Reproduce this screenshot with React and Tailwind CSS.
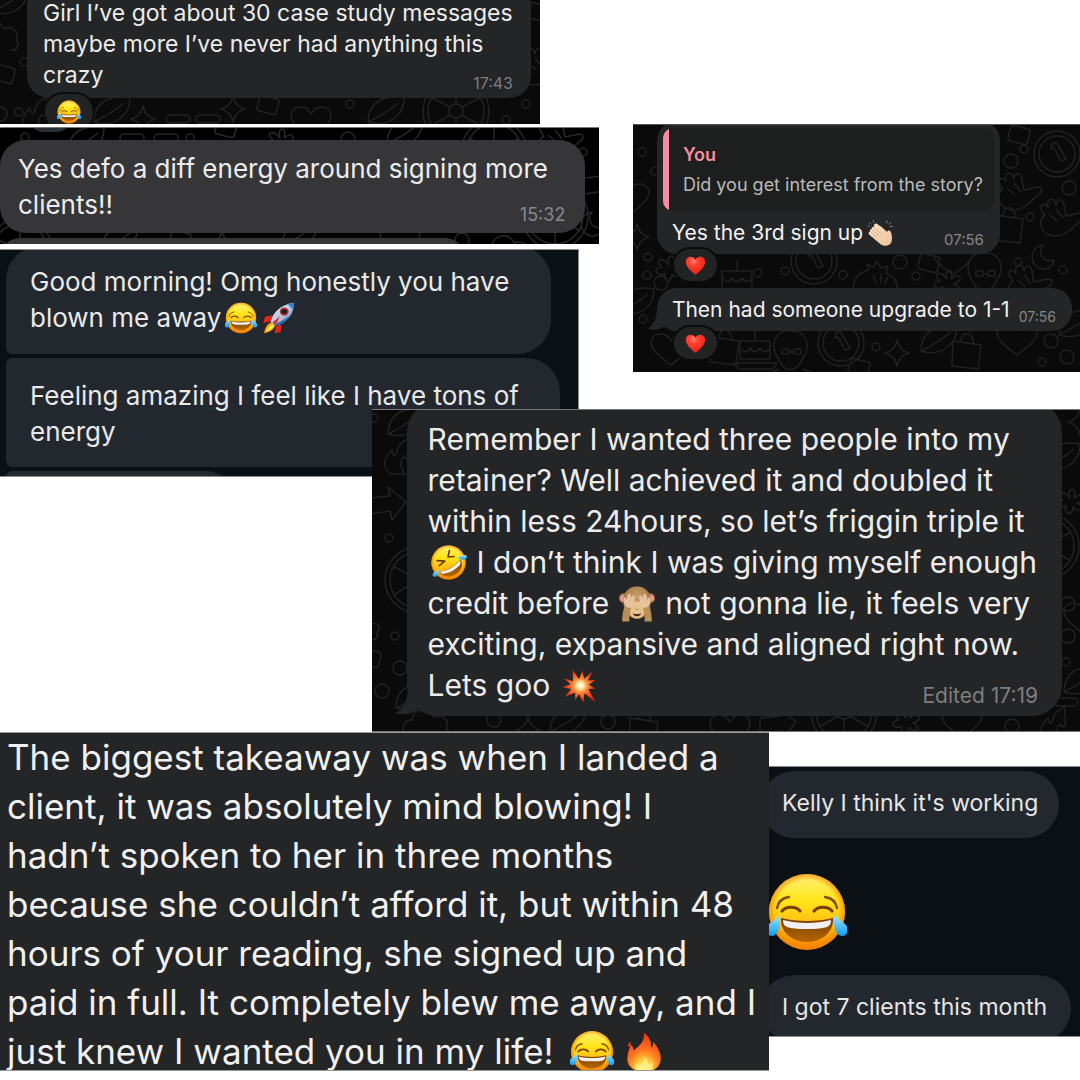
import clsx from "clsx";

const GRADIENTS = (
  <svg width="0" height="0" className="absolute" aria-hidden="true">
    <defs>
      <linearGradient id="face" x1="0" y1="0" x2="0" y2="1">
        <stop offset="0" stopColor="#fff27a" />
        <stop offset="0.35" stopColor="#ffe619" />
        <stop offset="0.62" stopColor="#ffc314" />
        <stop offset="1" stopColor="#f98200" />
      </linearGradient>
      <radialGradient id="rim" cx="50%" cy="50%" r="50%">
        <stop offset="0.82" stopColor="#f08a00" stopOpacity="0" />
        <stop offset="1" stopColor="#f07c00" stopOpacity="0.7" />
      </radialGradient>
      <linearGradient id="tear" x1="0" y1="0" x2="0" y2="1">
        <stop offset="0" stopColor="#a5e6ff" />
        <stop offset="1" stopColor="#0a9cf2" />
      </linearGradient>
      <linearGradient id="mouth" x1="0" y1="0" x2="0" y2="1">
        <stop offset="0" stopColor="#7a3c00" />
        <stop offset="1" stopColor="#b56800" />
      </linearGradient>
      <radialGradient id="heart" cx="40%" cy="25%" r="80%">
        <stop offset="0" stopColor="#ff8373" />
        <stop offset="0.3" stopColor="#ff4030" />
        <stop offset="1" stopColor="#e31b12" />
      </radialGradient>
      <radialGradient id="boom" cx="54%" cy="48%" r="55%">
        <stop offset="0" stopColor="#ffffff" />
        <stop offset="0.18" stopColor="#ffe9a0" />
        <stop offset="0.4" stopColor="#ff8a3a" />
        <stop offset="0.75" stopColor="#f23d14" />
        <stop offset="1" stopColor="#d9260b" />
      </radialGradient>
      <radialGradient id="fire" cx="50%" cy="92%" r="85%">
        <stop offset="0" stopColor="#fffbb0" />
        <stop offset="0.25" stopColor="#ffd23c" />
        <stop offset="0.55" stopColor="#ff7a20" />
        <stop offset="1" stopColor="#ee3a1c" />
      </radialGradient>
      <linearGradient id="skin" x1="0" y1="0" x2="1" y2="1">
        <stop offset="0" stopColor="#fbe3ca" />
        <stop offset="1" stopColor="#f0c29c" />
      </linearGradient>
      <linearGradient id="hull" x1="0" y1="0" x2="1" y2="1">
        <stop offset="0" stopColor="#dfeaf5" />
        <stop offset="0.5" stopColor="#b9cbdd" />
        <stop offset="1" stopColor="#3d7fc0" />
      </linearGradient>
      <radialGradient id="fur" cx="50%" cy="30%" r="65%">
        <stop offset="0" stopColor="#c9a068" />
        <stop offset="1" stopColor="#94683a" />
      </radialGradient>
    </defs>
  </svg>
);

function Joy({ className }) {
  return (
    <svg viewBox="0 0 80 80" className={className} role="img" aria-label="face with tears of joy">
      <circle cx="40" cy="40" r="38" fill="url(#face)" />
      <circle cx="40" cy="40" r="38" fill="url(#rim)" />
      <path d="M10 36c1-6 5-10 12-11M70 36c-1-6-5-10-12-11" fill="none" stroke="#8a4b00" strokeWidth="2.4" strokeLinecap="round" />
      <path d="M15 39c4-5 14-5 18 0M47 39c4-5 14-5 18 0" fill="none" stroke="#7a3f00" strokeWidth="3.2" strokeLinecap="round" />
      <path d="M14 46c16 4 36 4 52 0 1 14-11 24-26 24S13 60 14 46z" fill="url(#mouth)" />
      <path d="M16 48c15 4 33 4 48 0 0 7-4 9-24 9s-24-2-24-9z" fill="#f1f1f4" />
      <path d="M13 43c1 9-1 20-8 21-6 0-8-7-3-12 3-3 7-5 11-9z" fill="url(#tear)" />
      <path d="M67 43c-1 9 1 20 8 21 6 0 8-7 3-12-3-3-7-5-11-9z" fill="url(#tear)" />
    </svg>
  );
}

function Rofl({ className }) {
  return (
    <svg viewBox="0 0 80 80" className={className} role="img" aria-label="rolling on the floor laughing">
      <circle cx="40" cy="40" r="37" fill="url(#face)" />
      <circle cx="40" cy="40" r="37" fill="url(#rim)" />
      <path d="M15 36l17 1-12 10M42 14l-3 14 13-1" fill="none" stroke="#6e3b00" strokeWidth="3.5" strokeLinecap="round" strokeLinejoin="round" />
      <path d="M20 60C38 58 56 47 66 33c7 13 1 27-11 33-12 7-28 6-35-6z" fill="url(#mouth)" />
      <path d="M22 60c17-2 33-12 43-25 2 5 1 9-2 12-9 9-20 15-32 17-4 1-7 0-9-4z" fill="#f6f6f8" />
      <path d="M60 31c6-6 14-9 19-6 2 5-2 9-7 9-4 0-8-2-12-3z" fill="url(#tear)" />
      <path d="M20 56c-2 7-3 14-9 15-5 0-7-5-4-8 3-4 8-5 13-7z" fill="url(#tear)" />
    </svg>
  );
}

function Rocket({ className }) {
  return (
    <svg viewBox="0 0 80 80" className={className} role="img" aria-label="rocket">
      <path d="M24 33L5 37 1 53l17-5zM46 56l-2 19-15 4 3-17z" fill="#e8231a" />
      <path d="M25 50C12 51 4 65 3 78c12-2 25-8 28-21z" fill="#ff9d0a" />
      <path d="M26 55c-9 2-15 10-18 19 9-2 17-7 19-15z" fill="#ffe94a" />
      <path d="M19 50C24 26 46 5 78 2c-1 32-21 51-47 58z" fill="url(#hull)" />
      <path d="M62 5l16-3c0 6-1 12-3 17z" fill="#2e7fd0" />
      <path d="M31 60c14-4 28-13 37-27-12 10-27 18-41 22z" fill="#2b6db5" />
      <ellipse cx="53" cy="24" rx="11" ry="10" fill="#c32a2a" />
      <ellipse cx="53" cy="24" rx="7" ry="6" fill="#1c1f2b" />
      <path d="M24 50c5-2 12-8 17-15-1 9-6 17-13 21z" fill="#e3211b" />
    </svg>
  );
}

function Clap({ className }) {
  return (
    <svg viewBox="0 0 80 80" className={className} role="img" aria-label="clapping hands">
      <path d="M8 8l5 5M20 2l1 6M2 18l6 1M62 2l-2 7M74 8l-6 5M78 20l-7 0" stroke="#7c7c7c" strokeWidth="3" strokeLinecap="round" />
      <path d="M34 20c4-4 8-2 12 2l20 18c-1-8 6-9 8-2 3 10 5 22 1 31-4 8-14 12-22 7z" fill="#e6b893" />
      <path d="M23 13c4-4 8-2 11 1l28 25c0-8 7-9 9-2 3 9 6 22 0 32-6 11-21 13-30 5L7 45c-5-5 0-10 4-7-6-6 0-12 5-8-5-6 1-11 6-7-2-4-2-7 1-10z" fill="url(#skin)" />
      <path d="M12 38l18 16M17 31l19 17M23 24l20 18" stroke="#d19a73" strokeWidth="2" strokeLinecap="round" />
    </svg>
  );
}

function Heart({ className }) {
  return (
    <svg viewBox="0 0 80 80" className={className} role="img" aria-label="red heart">
      <path d="M40 76C28 66 3 48 3 26 3 6 30-1 40 18 50-1 77 6 77 26c0 22-25 40-37 50z" fill="url(#heart)" />
    </svg>
  );
}

function Monkey({ className }) {
  return (
    <svg viewBox="0 0 80 80" className={className} role="img" aria-label="see-no-evil monkey">
      <circle cx="11" cy="27" r="11" fill="#a9794a" />
      <circle cx="69" cy="27" r="11" fill="#a9794a" />
      <circle cx="10" cy="27" r="7" fill="#f598a0" />
      <circle cx="70" cy="27" r="7" fill="#f598a0" />
      <path d="M40 1c19 0 31 14 31 32 0 22-13 40-31 40S9 55 9 33C9 15 21 1 40 1z" fill="url(#fur)" />
      <path d="M40 34c10 0 17 12 17 23 0 9-7 15-17 15s-17-6-17-15c0-11 7-23 17-23z" fill="#e6c08d" />
      <path d="M31 61c6 2 12 2 18 0-2 8-16 8-18 0z" fill="#4a1711" />
      <path d="M37 51l2 1M43 51l-2 1" stroke="#775031" strokeWidth="2" />
      <path d="M7 79c0-14 2-28 7-38l14 4c-4 10-5 21-5 34zM73 79c0-14-2-28-7-38l-14 4c4 10 5 21 5 34z" fill="#ba9058" />
      <path d="M14 44c-5-7-5-17-2-19 3 0 4 3 5 6 1-9 3-15 7-14 3 1 2 6 2 12 2-7 5-10 8-8 3 3-1 15-2 24-4 5-13 5-18-1z" fill="#e8c3a0" />
      <path d="M66 44c5-7 5-17 2-19-3 0-4 3-5 6-1-9-3-15-7-14-3 1-2 6-2 12-2-7-5-10-8-8-3 3 1 15 2 24 4 5 13 5 18-1z" fill="#e8c3a0" />
    </svg>
  );
}

function Boom({ className }) {
  return (
    <svg viewBox="0 0 80 80" className={className} role="img" aria-label="collision">
      <path
        d="M25 2l15 22L48 4l4 19L72 6 61 27l18-1-16 11 15 9-16 1 17 31-26-21-3 22-10-20-9 14 0-18L6 66l16-19L1 43l19-7L4 21l22 8z"
        fill="url(#boom)"
      />
    </svg>
  );
}

function Fire({ className }) {
  return (
    <svg viewBox="0 0 80 88" className={className} role="img" aria-label="fire">
      <path
        d="M40 1c13 9 17 22 16 34 4-3 5-8 4-14 12 12 19 28 17 42-2 16-17 25-36 25S4 79 3 62C2 48 8 38 10 27c5 4 7 9 7 14 9-10 25-17 23-40zM10 21c-5 4-6 8-5 12 4-3 6-7 5-12z"
        fill="url(#fire)"
      />
      <path d="M41 54c8 7 5 14 11 17 3-3 4-5 4-8 6 10 4 21-6 25H31c-11-4-13-12-8-20 3 2 4 4 5 6 9-4 14-10 13-20z" fill="#fff08a" opacity=".75" />
    </svg>
  );
}

// outline drawings of the chat wallpaper, each centred on 0,0
const SHAPES = {
  dot: <circle r="4" />,
  ring: <circle r="7" />,
  star: <path d="M0-13c2 8 5 11 12 13-7 2-10 5-12 13-2-8-5-11-12-13 7-2 10-5 12-13z" />,
  heart: <path d="M0 16C-10 8-20 2-20-7-19-17-5-18 0-8 5-18 19-17 20-7 20 2 10 8 0 16z" />,
  moon: <path d="M0-10c-12 1-15 18-4 23 7 3 14-1 15-8-10 3-17-6-11-15z" />,
  pill: <rect x="-12" y="-4" width="24" height="8" rx="4" />,
  card: <rect x="-10" y="-8" width="20" height="16" rx="3" transform="rotate(14)" />,
  wheel: (
    <>
      <circle r="33" />
      <circle r="28" />
      <circle r="7" />
      <path d="M0-7v-21M6-4l19-10M6 4l19 11M0 7v21M-6 4l-19 11M-6-4l-19-10" />
    </>
  ),
  clock: (
    <>
      <circle r="23" />
      <circle r="18" />
      <path d="M-6-9l5-3 10 17-5 2-7-13-3 1z" />
    </>
  ),
  hand: <path d="M-18 14c-4-8-2-14 2-16-8-9-2-14 3-8-2-10 6-10 8-2 1-8 8-6 8 1l2 10 14-3c5 0 5 5 1 7L8 14c-8 6-18 7-26 0zM-12-3l8 7M-5-8l7 9" />,
  bun: <path d="M-22 14c-8-8-2-22 12-25l-2-6 6 3 4-5 4 6 7-2-2 7c12 5 14 16 8 23-10 5-26 5-37-1zM-6-6l3 8M2-7v9M9-5l-3 8" />,
  cake: <path d="M-15-4h30v18h-30zM-15 3c5 5 8 5 10 0 3 5 7 5 10 0 3 5 7 5 10 0M0-4v-10M-20 18h42l-4 6h-34z" />,
  face: <path d="M-15 4c-7-18 6-26 15-24 12-1 20 10 14 24l-6 10c-5 6-13 6-17 0zM-9-2h7v5h-7zM3-2h7v5H3zM-2 1h5M-12 18c-12 4-14 10-15 20M12 18c12 4 14 10 15 20" />,
  arrow: <path d="M-18-6L2-8l-2-9 18 15L4 16 2 7l-20 3z" />,
  flame: <path d="M-8 18c-9-8-5-18 2-24 0 6 4 6 5 2 1-8 6-10 12-14-2 8 2 12 0 18-1 4-4 3-4 0-6 4-6 12 1 18z" />,
  cloud: <path d="M-24 12c-9-6-4-17 4-16 1-12 18-14 22-3 9-4 16 4 12 11 5 5 1 11-6 10M-14 12c2 4 8 4 10 0" />,
  leaf: <path d="M-18 10C-18-10-2-18 18-14 18 4 2 16-18 10zM-18 10C-6 4 4-2 12-9" />,
  bag: <path d="M-14-10l28 4-3 24-26-3zM-6-9c0-12 12-11 13 2" />,
  flower: <path d="M0-4c-4-12 8-12 4 0 9-8 14 2 3 5 10 4 4 12-4 4 0 10-10 8-7-1-9 5-13-5-3-6-8-6-1-12 7-2z" />,
};

const WALL_MESSAGES = [
  ["cloud", 2, 36], ["leaf", 10, 2], ["dot", 24, 62], ["card", 4, 74], ["flame", 36, 114], ["dot", 19, 112], ["ring", 0, 114],
  ["star", 143, 119], ["pill", 178, 119], ["pill", 208, 119], ["star", 233, 109], ["card", 268, 105], ["heart", 311, 122],
  ["leaf", 112, 112], ["dot", 350, 104], ["leaf", 386, 112], ["wheel", 456, 111], ["dot", 506, 120],
  ["dot", 526, 104], ["card", 538, 12], ["hand", 540, 66],
];

const WALL_ENERGY = [
  ["dot", 25, 9], ["pill", 132, 10], ["pill", 166, 10], ["dot", 190, 10], ["leaf", 86, 14], ["card", 226, 0], ["flower", 280, 14],
  ["ring", 348, 11], ["leaf", 405, 6], ["wheel", 494, 24], ["hand", 560, 10], ["dot", 583, 24], ["arrow", 602, 56],
  ["moon", 592, 94], ["wheel", 20, 124], ["leaf", 120, 112], ["card", 180, 112], ["star", 222, 116], ["leaf", 300, 108],
  ["heart", 400, 112], ["ring", 462, 112], ["cloud", 512, 122], ["wheel", 555, 88],
];

const WALL_SIGNUP = [
  ["dot", 9, 27], ["heart", -4, 74], ["dot", 22, 46], ["star", 4, 112], ["dot", 15, 132], ["dot", 14, 150], ["ring", 28, 158],
  ["leaf", 3, 178], ["dot", 10, 194], ["flower", 36, 144], ["card", 386, 10], ["clock", 424, 29], ["ring", 378, 36],
  ["dot", 391, 24], ["hand", 386, 66], ["ring", 436, 63], ["hand", 428, 92], ["dot", 397, 92], ["bag", 376, 100],
  ["moon", 410, 130], ["dot", 385, 137], ["dot", 430, 145], ["clock", 181, 136], ["ring", 267, 137], ["dot", 125, 148],
  ["dot", 152, 146], ["dot", 210, 150], ["cake", 104, 150], ["bun", 246, 156], ["dot", 283, 151], ["flower", 314, 158],
  ["card", 296, 138], ["face", 352, 148], ["hand", 396, 158], ["heart", 320, 134],
  ["heart", 38, 224], ["bag", 92, 222], ["cake", 122, 220], ["face", 158, 226], ["clock", 208, 218], ["dot", 243, 222],
  ["star", 264, 228], ["leaf", 306, 216], ["bag", 334, 226], ["heart", 384, 214], ["ring", 418, 216],
  ["dot", 409, 237], ["ring", 434, 232], ["leaf", 444, 200], ["card", 226, 243],
];

const WALL_RETAINER = [
  ["leaf", 34, 14], ["dot", 2, 8], ["flame", 26, 46], ["arrow", 16, 94], ["dot", 17, 128], ["wheel", 46, 170],
  ["card", -4, 220], ["dot", 23, 226], ["card", -2, 248], ["ring", 28, 258], ["ring", 10, 281], ["leaf", 42, 288],
  ["cloud", 60, 314], ["ring", 122, 310], ["star", 156, 320], ["leaf", 196, 312], ["ring", 236, 312], ["bag", 272, 318],
  ["heart", 358, 320], ["arrow", 406, 314], ["wheel", 472, 302], ["flower", 534, 312], ["heart", 590, 312],
  ["ring", 640, 316], ["flame", 682, 314], ["star", 708, 12], ["leaf", 690, 48], ["flower", 698, 92], ["wheel", 674, 136],
  ["ring", 696, 194], ["heart", 712, 208], ["ring", 696, 226], ["dot", 694, 252], ["leaf", 710, 272], ["pill", 694, 292],
];

function Wallpaper({ items, className }) {
  return (
    <svg
      className={clsx("pointer-events-none absolute inset-0 size-full", className)}
      fill="none"
      stroke="currentColor"
      strokeWidth="1.5"
      strokeLinejoin="round"
      aria-hidden="true"
    >
      {items.map(([shape, x, y]) => (
        <g key={`${shape}-${x}-${y}`} transform={`translate(${x} ${y})`}>
          {SHAPES[shape]}
        </g>
      ))}
    </svg>
  );
}

// message text, one row per line, with the time at the end of the last row
function Lines({ rows, time, timeClass }) {
  return (
    <div className="whitespace-nowrap">
      {rows.map((row, i) => (
        <div key={i} className="flex justify-between">
          <p>{row}</p>
          {time && i === rows.length - 1 && (
            <time className={clsx("self-end", timeClass)}>{time}</time>
          )}
        </div>
      ))}
    </div>
  );
}

function Reaction({ children, className }) {
  return (
    <div
      className={clsx(
        "relative flex items-center justify-center rounded-full bg-[#212423] ring-2 ring-[#0b0b0b]",
        className
      )}
    >
      {children}
    </div>
  );
}

function Tail({ className }) {
  return (
    <svg viewBox="0 0 24 24" className={clsx("absolute", className)} aria-hidden="true">
      <path d="M10 0c0 11-3 18-10 22 8 2 15 0 20-5l4-17z" fill="#242527" />
    </svg>
  );
}

function MessagesPanel() {
  return (
    <section className="relative h-31 w-1/2 overflow-hidden bg-[#0a0a0a]">
      <Wallpaper items={WALL_MESSAGES} className="text-[#222222]" />
      <div className="relative -mt-4 mr-[9px] ml-[27px] rounded-[22px] bg-[#242527] pt-3.5 pr-[18px] pb-[7px] pl-4 text-[23px] leading-[31px] text-[#ececec]">
        <Lines
          rows={[
            "Girl I’ve got about 30 case study messages",
            "maybe more I’ve never had anything this",
            "crazy",
          ]}
          time="17:43"
          timeClass="text-base leading-4 text-[#7d7e80]"
        />
      </div>
      <Reaction className="-mt-1 ml-[45px] h-9 w-12">
        <Joy className="size-6" />
      </Reaction>
    </section>
  );
}

function EnergyPanel() {
  return (
    <section className="relative h-[117px] w-[55.5%] overflow-hidden border-t border-[#777] bg-black">
      <Wallpaper items={WALL_ENERGY} className="text-[#272727]" />
      <div className="relative -mt-7 ml-7 h-8 w-11 rounded-full bg-[#2a3136]" />
      <div className="relative mt-2 mr-[14px] rounded-[26px] bg-[#363638] pt-[11px] pr-5 pb-2.5 pl-[18px] text-[26px] leading-9 text-[#ececec]">
        <Lines
          rows={["Yes defo a diff energy around signing more", "clients!!"]}
          time="15:32"
          timeClass="text-lg leading-4 text-[#88888d]"
        />
      </div>
      <div className="relative mt-[5px] h-10 w-[465px] rounded-[26px] bg-[#363638]" />
    </section>
  );
}

function MorningPanel() {
  return (
    <section className="h-[228px] w-[53.6%] overflow-hidden border-t border-r border-b border-[#8a8d90] bg-[#0b1014] pl-1.5 text-[26px] leading-9 text-[#e9e9ea]">
      <div className="-mt-1 mr-[27px] rounded-[34px] rounded-bl-md bg-[#23282f] pt-[18px] pb-[18px] pl-6">
        <Lines
          rows={[
            "Good morning! Omg honestly you have",
            <span className="flex items-center">
              blown me away
              <Joy className="ml-1 size-8" />
              <Rocket className="ml-1.5 size-8" />
            </span>,
          ]}
        />
      </div>
      <div className="mt-1 mr-[18px] rounded-[34px] rounded-l-md bg-[#23282f] pt-5 pb-[17px] pl-6">
        <Lines rows={["Feeling amazing I feel like I have tons of", "energy"]} />
      </div>
      <div className="mt-1 h-16 w-[232px] rounded-[34px] rounded-l-md bg-[#23282f]" />
    </section>
  );
}

function SignUpPanel() {
  return (
    <section className="relative mt-31 h-62 w-[41.4%] overflow-hidden border-t border-[#555] bg-[#0a0a0a] pl-6 text-[21px] leading-[30px] text-[#f1f1f1]">
      <Wallpaper items={WALL_SIGNUP} className="text-[#212121]" />
      <div className="relative -mt-1 w-[343px] rounded-[20px] bg-[#242527] px-1.5 pt-[7px] pb-1.5">
        <blockquote className="flex overflow-hidden rounded-[10px] bg-[#1d1f1e] text-lg leading-[30px] whitespace-nowrap">
          <div className="w-1.5 bg-[#f98d9d]" />
          <div className="pt-3 pb-[11px] pl-3.5">
            <p className="font-semibold text-[#f98d9d]">You</p>
            <p className="text-[#b9bbbb]">Did you get interest from the story?</p>
          </div>
        </blockquote>
        <div className="pt-[7px] pr-2.5 pl-[9px]">
          <Lines
            rows={[
              <span className="flex items-center">
                Yes the 3rd sign up
                <Clap className="ml-1 size-[26px]" />
              </span>,
            ]}
            time="07:56"
            timeClass="text-[15px] leading-4 text-[#858688]"
          />
        </div>
      </div>
      <Reaction className="-mt-[5px] ml-[17px] h-8 w-[43px]">
        <Heart className="size-[21px]" />
      </Reaction>
      <div className="relative mt-[7px] mr-2 rounded-[20px] bg-[#242527] pt-[7px] pr-4 pb-1.5 pl-[15px]">
        <Tail className="bottom-0 -left-2.5 size-6" />
        <div className="relative">
          <Lines
            rows={["Then had someone upgrade to 1-1"]}
            time="07:56"
            timeClass="text-sm leading-4 text-[#858688]"
          />
        </div>
      </div>
      <Reaction className="-mt-1 ml-[17px] h-8 w-[43px]">
        <Heart className="size-[21px]" />
      </Reaction>
    </section>
  );
}

function RetainerPanel() {
  return (
    <section className="relative -mt-17 ml-auto h-[323px] w-[65.6%] overflow-hidden border-y border-[#777] bg-[#0a0a0a]">
      <Wallpaper items={WALL_RETAINER} className="text-[#222222]" />
      <div className="relative -mt-2 mr-[18px] ml-[35px] rounded-[30px] bg-[#242527] pt-[17px] pr-6 pb-2.5 pl-[21px] text-[30px] leading-[41px] text-[#ececec]">
        <Tail className="bottom-0 -left-3 size-8" />
        <div className="relative">
          <Lines
            rows={[
              "Remember I wanted three people into my",
              "retainer? Well achieved it and doubled it",
              "within less 24hours, so let’s friggin triple it",
              <span className="flex items-center">
                <Rofl className="mr-2.5 ml-0.5 size-[37px]" />I don’t think I was giving myself enough
              </span>,
              <span className="flex items-center">
                credit before
                <Monkey className="mr-2.5 ml-2.5 size-9" />
                not gonna lie, it feels very
              </span>,
              "exciting, expansive and aligned right now.",
              <span className="flex items-center">
                Lets goo
                <Boom className="ml-3 size-[34px]" />
              </span>,
            ]}
            time="Edited 17:19"
            timeClass="text-[21px] leading-5 text-[#7d7e80]"
          />
        </div>
      </div>
    </section>
  );
}

function TakeawayPanel() {
  return (
    <section className="h-[339px] w-[71.2%] overflow-hidden border-y border-[#999] bg-[#242527] pl-[7px] text-[35px] leading-[49px] text-[#f0f0f0]">
      <Lines
        rows={[
          "The biggest takeaway was when I landed a",
          "client, it was absolutely mind blowing! I",
          "hadn’t spoken to her in three months",
          "because she couldn’t afford it, but within 48",
          "hours of your reading, she signed up and",
          "paid in full. It completely blew me away, and I",
          <span className="flex items-center">
            just knew I wanted you in my life!
            <Joy className="ml-4 size-11" />
            <Fire className="ml-3 h-11 w-9" />
          </span>,
        ]}
      />
    </section>
  );
}

function ClientsPanel() {
  return (
    <section className="mt-[34px] h-[271px] flex-1 overflow-hidden border-y border-[#8a8d90] bg-[#0b1014] text-[23px] leading-8 text-[#e6e6e7]">
      <p className="mt-1 mr-[21px] -ml-2 rounded-full bg-[#23282f] pt-4 pb-[19px] pl-[21px] whitespace-nowrap">
        Kelly I think it's working
      </p>
      <Joy className="mt-[34px] -ml-0.5 size-20" />
      <p className="mt-[23px] mr-[9px] -ml-2 rounded-full bg-[#23282f] pt-4 pb-[19px] pl-[21px] whitespace-nowrap">
        I got 7 clients this month
      </p>
    </section>
  );
}

export default function App() {
  return (
    <main className="min-h-screen overflow-hidden bg-white font-['Inter',sans-serif]">
      {GRADIENTS}
      <div className="flex items-start justify-between">
        <div className="-mr-[50%] flex w-full flex-col">
          <MessagesPanel />
          <div className="h-[3px]" />
          <EnergyPanel />
          <div className="h-[5px]" />
          <MorningPanel />
        </div>
        <SignUpPanel />
      </div>
      <RetainerPanel />
      <div className="flex items-start">
        <TakeawayPanel />
        <ClientsPanel />
      </div>
    </main>
  );
}
